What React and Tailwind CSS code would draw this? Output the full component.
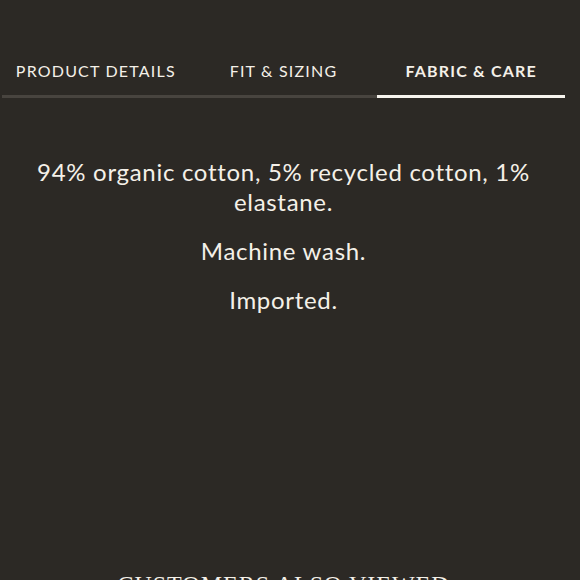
export default function App() {
  const tabs = ['PRODUCT DETAILS', 'FIT & SIZING', 'FABRIC & CARE'];
  const active = 2;
  return (
    <div className="w-[580px] h-[580px] overflow-hidden bg-[#2c2925] text-[#f4f0e8] font-['Lato',sans-serif]">
      <div className="ml-[2px] w-[563px] pt-[58px]">
        {/* Tabs */}
        <div className="grid grid-cols-3">
          {tabs.map((t, i) => (
            <div
              key={t}
              className={`h-[40px] flex items-start justify-center pt-[1px] text-[16px] tracking-[1.2px] border-b-[3px] ${
                i === active ? 'border-[#f7f4ee] font-bold' : 'border-[#48443f]'
              }`}
            >
              {t}
            </div>
          ))}
        </div>

        {/* Content */}
        <div className="pt-[59px] px-[10px] text-center text-[24px] leading-[30px] tracking-[0.7px]">
          <p>94% organic cotton, 5% recycled cotton, 1% elastane.</p>
          <p className="mt-[19px]">Machine wash.</p>
          <p className="mt-[19px]">Imported.</p>
        </div>

        <h2 className="mt-[257px] text-center font-['Liberation_Serif',serif] text-[24px] leading-[24px] tracking-[1px]">
          CUSTOMERS ALSO VIEWED
        </h2>
      </div>
    </div>
  );
}
